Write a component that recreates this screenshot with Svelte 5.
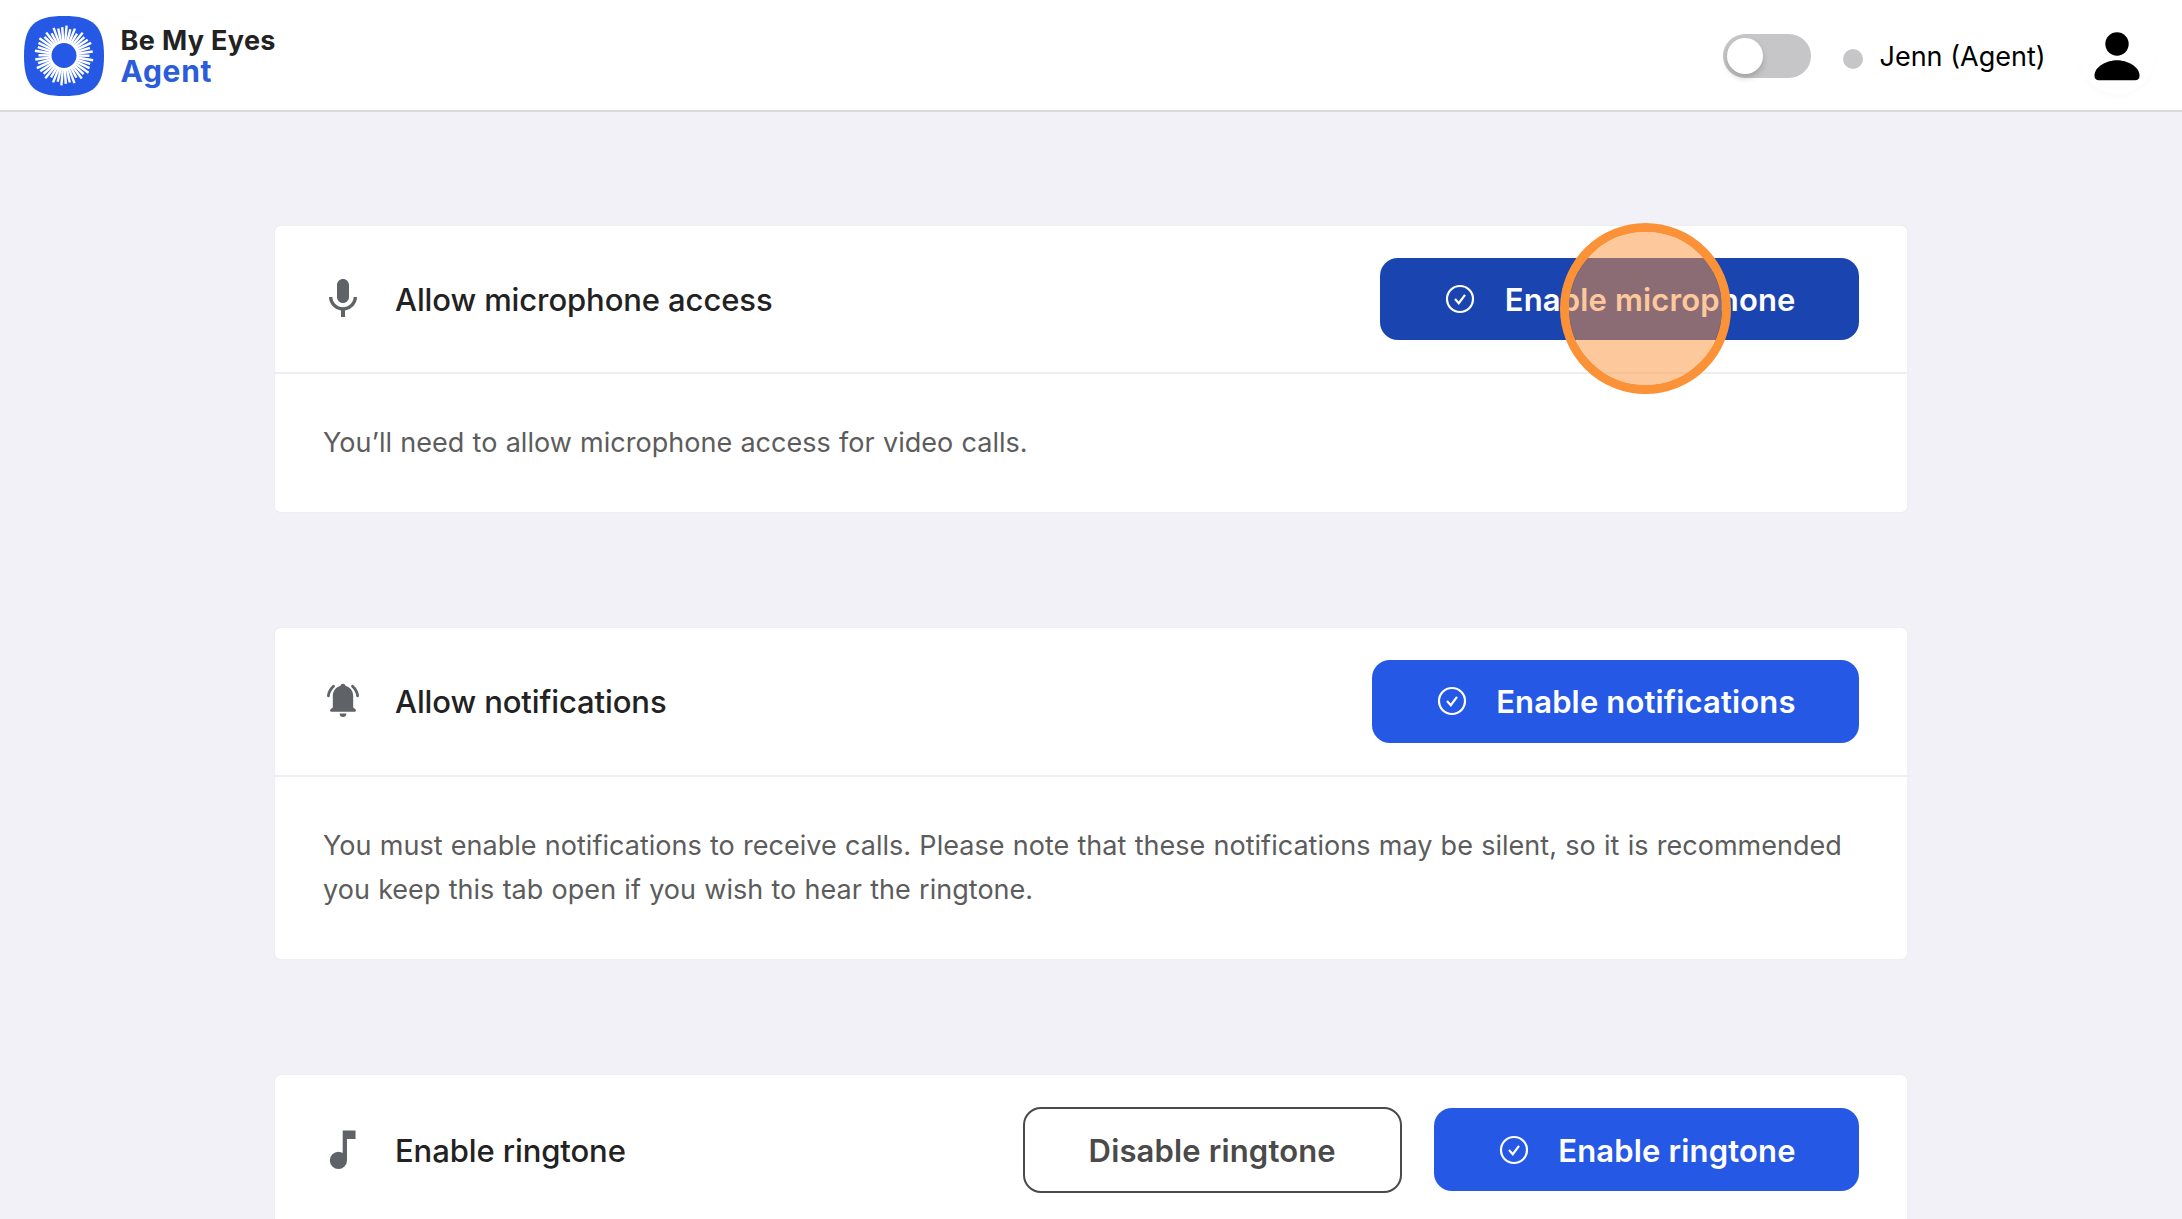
<script lang="ts">
	type Action = { label: string; kind: 'primary' | 'outline'; active?: boolean };
	type Section = { icon: 'mic' | 'bell' | 'note'; title: string; text?: string; actions: Action[] };

	const sections: Section[] = [
		{
			icon: 'mic',
			title: 'Allow microphone access',
			text: 'You’ll need to allow microphone access for video calls.',
			actions: [{ label: 'Enable microphone', kind: 'primary', active: true }]
		},
		{
			icon: 'bell',
			title: 'Allow notifications',
			text: 'You must enable notifications to receive calls. Please note that these notifications may be silent, so it is recommended you keep this tab open if you wish to hear the ringtone.',
			actions: [{ label: 'Enable notifications', kind: 'primary' }]
		},
		{
			icon: 'note',
			title: 'Enable ringtone',
			actions: [
				{ label: 'Disable ringtone', kind: 'outline' },
				{ label: 'Enable ringtone', kind: 'primary' }
			]
		}
	];

	let available = $state(false);

	// rays of the logo, lengths vary a little round the circle
	const lengths = [30, 27, 29, 25.5, 29.5, 27.5, 28.5];
	const rays = Array.from({ length: 42 }, (_, i) => ({
		angle: 5 + (i * 360) / 42,
		end: 39.5 - lengths[i % lengths.length]
	}));
</script>

<div class="page">
	<header class="topbar">
		<div class="brand">
			<svg class="logo" viewBox="0 0 80 80" aria-hidden="true">
				<path d="M40 0C70 0 80 10 80 40S70 80 40 80 0 70 0 40 10 0 40 0Z" fill="#2558e5" />
				<g stroke="#fff" stroke-width="2.4">
					{#each rays as ray}
						<line x1="40" y1="25.5" x2="40" y2={ray.end} transform="rotate({ray.angle} 40 39.5)" />
					{/each}
				</g>
				<circle cx="40" cy="39.5" r="13.7" fill="none" stroke="#fff" stroke-width="2.4" />
			</svg>
			<div class="brand-text">
				<span class="brand-name">Be My Eyes</span>
				<span class="brand-role">Agent</span>
			</div>
		</div>
		<div class="account">
			<button
				class="toggle"
				class:on={available}
				role="switch"
				aria-checked={available}
				aria-label="Available"
				onclick={() => (available = !available)}
			>
				<span class="knob"></span>
			</button>
			<span class="status"></span>
			<span class="user">Jenn (Agent)</span>
			<div class="avatar">
				<svg width="46" height="50" viewBox="0 0 46 50" aria-hidden="true">
					<circle cx="23" cy="12" r="11.7" />
					<path d="M23 28.3C33 28.3 45.5 34.5 45.5 43.5Q45.5 48.2 41 48.2H5Q.5 48.2 .5 43.5C.5 34.5 13 28.3 23 28.3Z" />
				</svg>
			</div>
		</div>
	</header>

	<main>
		{#each sections as section}
			<section class="card">
				<div class="card-header">
					<div class="icon">
						{#if section.icon === 'mic'}
							<svg width="48" height="48" viewBox="0 0 24 24" aria-hidden="true">
								<path d="M12 14c1.66 0 3-1.34 3-3V5c0-1.66-1.34-3-3-3S9 3.34 9 5v6c0 1.66 1.34 3 3 3zm5.3-3c0 3-2.54 5.1-5.3 5.1S6.7 14 6.7 11H5c0 3.41 2.72 6.23 6 6.72V21h2v-3.28c3.28-.48 6-3.3 6-6.72h-1.7z" />
							</svg>
						{:else if section.icon === 'bell'}
							<svg width="48" height="48" viewBox="0 0 48 48" aria-hidden="true">
								<path d="M24 6.7c1.5 0 2.3.8 2.5 2 4.7 1.5 7.7 5.3 7.7 10.3v11.5l2.2 1.8c1 1 .6 2.4-.6 2.4H12.2c-1.2 0-1.6-1.4-.6-2.4l2.2-1.8V19c0-5 3-8.8 7.7-10.3.2-1.2 1-2 2.5-2z" />
								<path d="M20.6 36.4h6.8c0 2.2-1.5 3.6-3.4 3.6s-3.4-1.4-3.4-3.6z" />
								<path class="waves" d="M9.4 18.8Q10 13.5 14.5 9.3M38.6 18.8Q38 13.5 33.5 9.3" />
							</svg>
						{:else}
							<svg width="51.4" height="51.4" viewBox="0 -960 960 960" aria-hidden="true">
								<path d="M400-120q-66 0-113-47t-47-113q0-66 47-113t113-47q23 0 42.5 5.5T480-418v-422h240v160H560v400q0 66-47 113t-113 47Z" />
							</svg>
						{/if}
					</div>
					<h2>{section.title}</h2>
					<div class="actions">
						{#each section.actions as action}
							<button class="btn {action.kind}" class:active={action.active}>
								{#if action.kind === 'primary'}
									<svg width="32" height="32" viewBox="0 0 32 32" aria-hidden="true">
										<circle cx="16" cy="16" r="13" />
										<path d="M11 16l3.8 4.2L21 11.8" />
									</svg>
								{/if}
								<span class="label">{action.label}</span>
								{#if action.active}
									<span class="click-marker"></span>
								{/if}
							</button>
						{/each}
					</div>
				</div>
				<div class="card-body">
					{#if section.text}
						<p>{section.text}</p>
					{/if}
				</div>
			</section>
		{/each}
	</main>
</div>

<style>
	:global(body) {
		background: #f2f1f7;
		overflow: hidden;
	}

	.page {
		height: 1219px;
		overflow: hidden;
		font-family: Inter, 'Liberation Sans', sans-serif;
		color: #222;
	}

	.topbar {
		box-sizing: border-box;
		height: 112px;
		padding: 2px 27px 0 24px;
		display: flex;
		align-items: center;
		justify-content: space-between;
		background: #fff;
		border-bottom: 2px solid #d9d9dd;
	}

	.brand {
		display: flex;
		align-items: center;
		gap: 16.5px;
	}

	.logo {
		width: 80px;
		height: 80px;
	}

	.brand-text {
		display: flex;
		flex-direction: column;
		padding-bottom: 2px;
		font-weight: 700;
	}

	.brand-name {
		font-size: 27px;
		line-height: 31px;
		letter-spacing: 0.35px;
	}

	.brand-role {
		font-size: 30px;
		line-height: 30px;
		letter-spacing: 0.7px;
		color: #2b5cd9;
	}

	.account {
		display: flex;
		align-items: center;
	}

	.toggle {
		width: 88px;
		height: 44px;
		padding: 4px;
		border: 0;
		border-radius: 22px;
		background: #c6c6c8;
		display: flex;
	}

	.toggle.on {
		justify-content: flex-end;
		background: #2558e5;
	}

	.knob {
		width: 36px;
		height: 36px;
		border-radius: 50%;
		background: #fff;
		box-shadow: 0 4px 6px rgba(0, 0, 0, 0.18);
	}

	.status {
		width: 20px;
		height: 20px;
		margin: 6px 17px 0 32px;
		border-radius: 50%;
		background: #c6c6c8;
	}

	.user {
		width: 199.5px;
		font-size: 27px;
		color: #000;
	}

	.avatar {
		width: 76px;
		height: 76px;
		border-radius: 50%;
		display: flex;
		align-items: center;
		justify-content: center;
		box-shadow: 0 4px 4px rgba(0, 0, 0, 0.015);
	}

	.avatar svg {
		margin-top: 2px;
	}

	main {
		width: 1632px;
		margin: 0 auto;
		padding-top: 113.7px;
		display: flex;
		flex-direction: column;
		gap: 116px;
	}

	.card {
		background: #fff;
		border-radius: 6px;
		box-shadow: 0 0 0 1.5px #efeff1;
	}

	.card-header {
		display: flex;
		align-items: center;
		padding: 32px 48px;
		border-bottom: 2px solid #eeeef0;
	}

	.icon {
		width: 40px;
		margin-right: 32px;
		display: flex;
		justify-content: center;
		fill: #5f6368;
	}

	.icon svg {
		flex-shrink: 0;
	}

	.waves {
		fill: none;
		stroke: #5f6368;
		stroke-width: 2.8;
		stroke-linecap: round;
	}

	h2 {
		margin: 0;
		padding-top: 0.9px;
		font-size: 31px;
		font-weight: 500;
		letter-spacing: -0.1px;
		white-space: nowrap;
	}

	.actions {
		margin-left: auto;
		display: flex;
		align-items: center;
		gap: 32px;
	}

	.btn {
		position: relative;
		box-sizing: border-box;
		height: 82.6px;
		padding: 0 63.4px 0 64px;
		display: flex;
		align-items: center;
		gap: 28.5px;
		border: 0;
		border-radius: 18px;
		font-family: inherit;
		font-size: 31px;
		font-weight: 600;
		letter-spacing: 0.15px;
		white-space: nowrap;
	}

	.btn svg {
		fill: none;
		stroke: #fff;
		stroke-width: 2.2;
	}

	.label {
		padding-top: 0.9px;
	}

	.primary {
		background: #2558e5;
		color: #fff;
	}

	.primary.active {
		background: #1a44b0;
	}

	.outline {
		height: 86px;
		padding: 0 64px;
		background: #fff;
		color: #4a4a4a;
		border: 2px solid #4a4a4a;
	}

	.click-marker {
		position: absolute;
		left: 180px;
		top: -34.5px;
		box-sizing: border-box;
		width: 171px;
		height: 171px;
		border: 9px solid #fb9238;
		border-radius: 50%;
		background: rgba(251, 146, 56, 0.5);
		background-clip: padding-box;
		z-index: 1;
	}

	.card-body {
		min-height: 44px;
		padding: 46.95px 48px;
	}

	p {
		margin: 0;
		font-size: 27px;
		line-height: 44px;
		word-spacing: 0.65px;
		letter-spacing: 0.02px;
		color: #5c5c5c;
	}
</style>
